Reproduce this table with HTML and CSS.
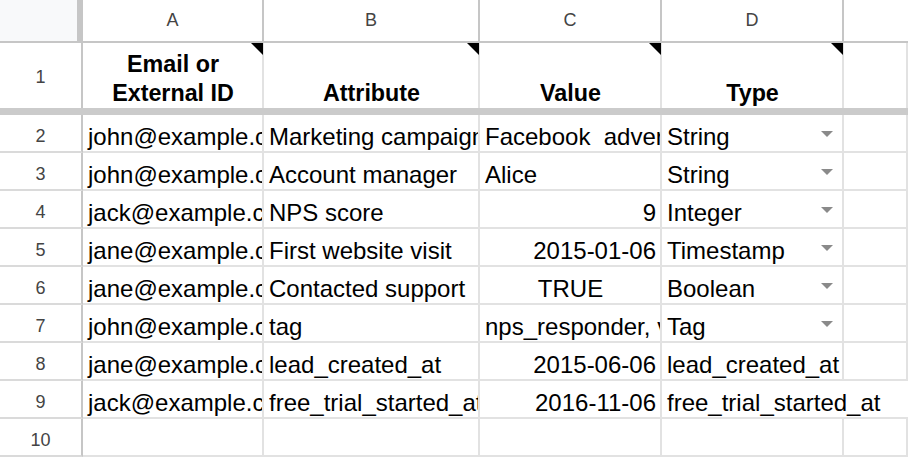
FILE: index.html
```html
<!DOCTYPE html>
<html>
<head>
<meta charset="utf-8">
<link rel="stylesheet" href="styles.css">
</head>
<body>
<div class="sheet">
  <div class="corner"></div>
  <div class="colhead">A</div>
  <div class="colhead">B</div>
  <div class="colhead">C</div>
  <div class="colhead">D</div>
  <div class="colhead colhead-last"></div>

  <div class="rowhead rowhead-1">1</div>
  <div class="cell title"><span>Email or<br>External ID</span><i class="note"></i></div>
  <div class="cell title"><span>Attribute</span><i class="note"></i></div>
  <div class="cell title"><span>Value</span><i class="note"></i></div>
  <div class="cell title"><span>Type</span><i class="note"></i></div>
  <div class="cell title-empty"></div>

  <div class="freeze"></div>

  <div class="rowhead">2</div>
  <div class="cell"><span>john@example.com</span></div>
  <div class="cell"><span>Marketing campaign</span></div>
  <div class="cell"><span class="pre">Facebook  advertising</span></div>
  <div class="cell dd"><span>String</span><i class="arrow"></i></div>
  <div class="cell"></div>

  <div class="rowhead">3</div>
  <div class="cell"><span>john@example.com</span></div>
  <div class="cell"><span>Account manager</span></div>
  <div class="cell"><span>Alice</span></div>
  <div class="cell dd"><span>String</span><i class="arrow"></i></div>
  <div class="cell"></div>

  <div class="rowhead">4</div>
  <div class="cell"><span>jack@example.com</span></div>
  <div class="cell"><span>NPS score</span></div>
  <div class="cell right"><span>9</span></div>
  <div class="cell dd"><span>Integer</span><i class="arrow"></i></div>
  <div class="cell"></div>

  <div class="rowhead">5</div>
  <div class="cell"><span>jane@example.com</span></div>
  <div class="cell"><span>First website visit</span></div>
  <div class="cell right"><span>2015-01-06</span></div>
  <div class="cell dd"><span>Timestamp</span><i class="arrow"></i></div>
  <div class="cell"></div>

  <div class="rowhead">6</div>
  <div class="cell"><span>jane@example.com</span></div>
  <div class="cell"><span>Contacted support</span></div>
  <div class="cell center"><span>TRUE</span></div>
  <div class="cell dd"><span>Boolean</span><i class="arrow"></i></div>
  <div class="cell"></div>

  <div class="rowhead">7</div>
  <div class="cell"><span>john@example.com</span></div>
  <div class="cell"><span>tag</span></div>
  <div class="cell"><span>nps_responder, vip</span></div>
  <div class="cell dd"><span>Tag</span><i class="arrow"></i></div>
  <div class="cell"></div>

  <div class="rowhead">8</div>
  <div class="cell"><span>jane@example.com</span></div>
  <div class="cell"><span>lead_created_at</span></div>
  <div class="cell right"><span>2015-06-06</span></div>
  <div class="cell"><span>lead_created_at</span></div>
  <div class="cell"></div>

  <div class="rowhead">9</div>
  <div class="cell"><span>jack@example.com</span></div>
  <div class="cell"><span>free_trial_started_at</span></div>
  <div class="cell right"><span>2016-11-06</span></div>
  <div class="cell span2"><span>free_trial_started_at</span></div>

  <div class="rowhead">10</div>
  <div class="cell"></div>
  <div class="cell"></div>
  <div class="cell"></div>
  <div class="cell"></div>
  <div class="cell"></div>
</div>
</body>
</html>
```

FILE: styles.css
```css
html, body {
  margin: 0;
  padding: 0;
  background: #ffffff;
}

body {
  width: 908px;
  height: 458px;
  overflow: hidden;
  font-family: "Liberation Sans", Arial, sans-serif;
}

.sheet {
  display: grid;
  grid-template-columns: 83px 181px 216px 182px 182px 64px;
  grid-template-rows: 43px 65px 7px repeat(9, 38px);
}

.corner {
  background: #f8f9fa;
  border-right: 2px solid #c6c6c6;
  border-bottom: 2px solid #c6c6c6;
  box-shadow: inset -4px 0 0 #c6c6c6;
}

.colhead {
  display: flex;
  align-items: center;
  justify-content: center;
  border-right: 2px solid #c6c6c6;
  border-bottom: 2px solid #c6c6c6;
  font-size: 18px;
  color: #444444;
  background: #ffffff;
}

.colhead-last {
  border-right: none;
}

.rowhead {
  display: flex;
  align-items: center;
  justify-content: center;
  padding-top: 6px;
  border-right: 2px solid #c6c6c6;
  border-bottom: 2px solid #dadada;
  font-size: 18px;
  color: #444444;
}

.rowhead-1 {
  border-bottom: none;
  padding-top: 3px;
}

.freeze {
  grid-column: 1 / -1;
  background: #cbcbcb;
}

.cell {
  position: relative;
  display: flex;
  align-items: flex-end;
  justify-content: flex-start;
  overflow: hidden;
  padding: 0 4px 1px 5px;
  border-right: 2px solid #e2e2e2;
  border-bottom: 2px solid #e2e2e2;
  font-size: 24px;
  line-height: 26px;
  color: #000000;
  white-space: nowrap;
}

.cell span {
  flex: none;
}

.pre {
  white-space: pre;
}

.right {
  justify-content: flex-end;
}

.center {
  justify-content: center;
}

.span2 {
  grid-column: span 2;
  border-right: none;
}

.title {
  justify-content: center;
  text-align: center;
  font-weight: bold;
  font-size: 23.3px;
  line-height: 29px;
  padding-bottom: 0;
  border-bottom: none;
  overflow: visible;
}

.title-empty {
  border-bottom: none;
}

.note {
  position: absolute;
  top: 0;
  right: -1px;
  width: 12px;
  height: 12px;
  background: #000000;
  clip-path: polygon(0 0, 100% 0, 100% 100%);
}

.arrow {
  position: absolute;
  top: 16px;
  right: 9px;
  width: 0;
  height: 0;
  border-left: 6px solid transparent;
  border-right: 6px solid transparent;
  border-top: 6px solid #8a8a8a;
}
```
